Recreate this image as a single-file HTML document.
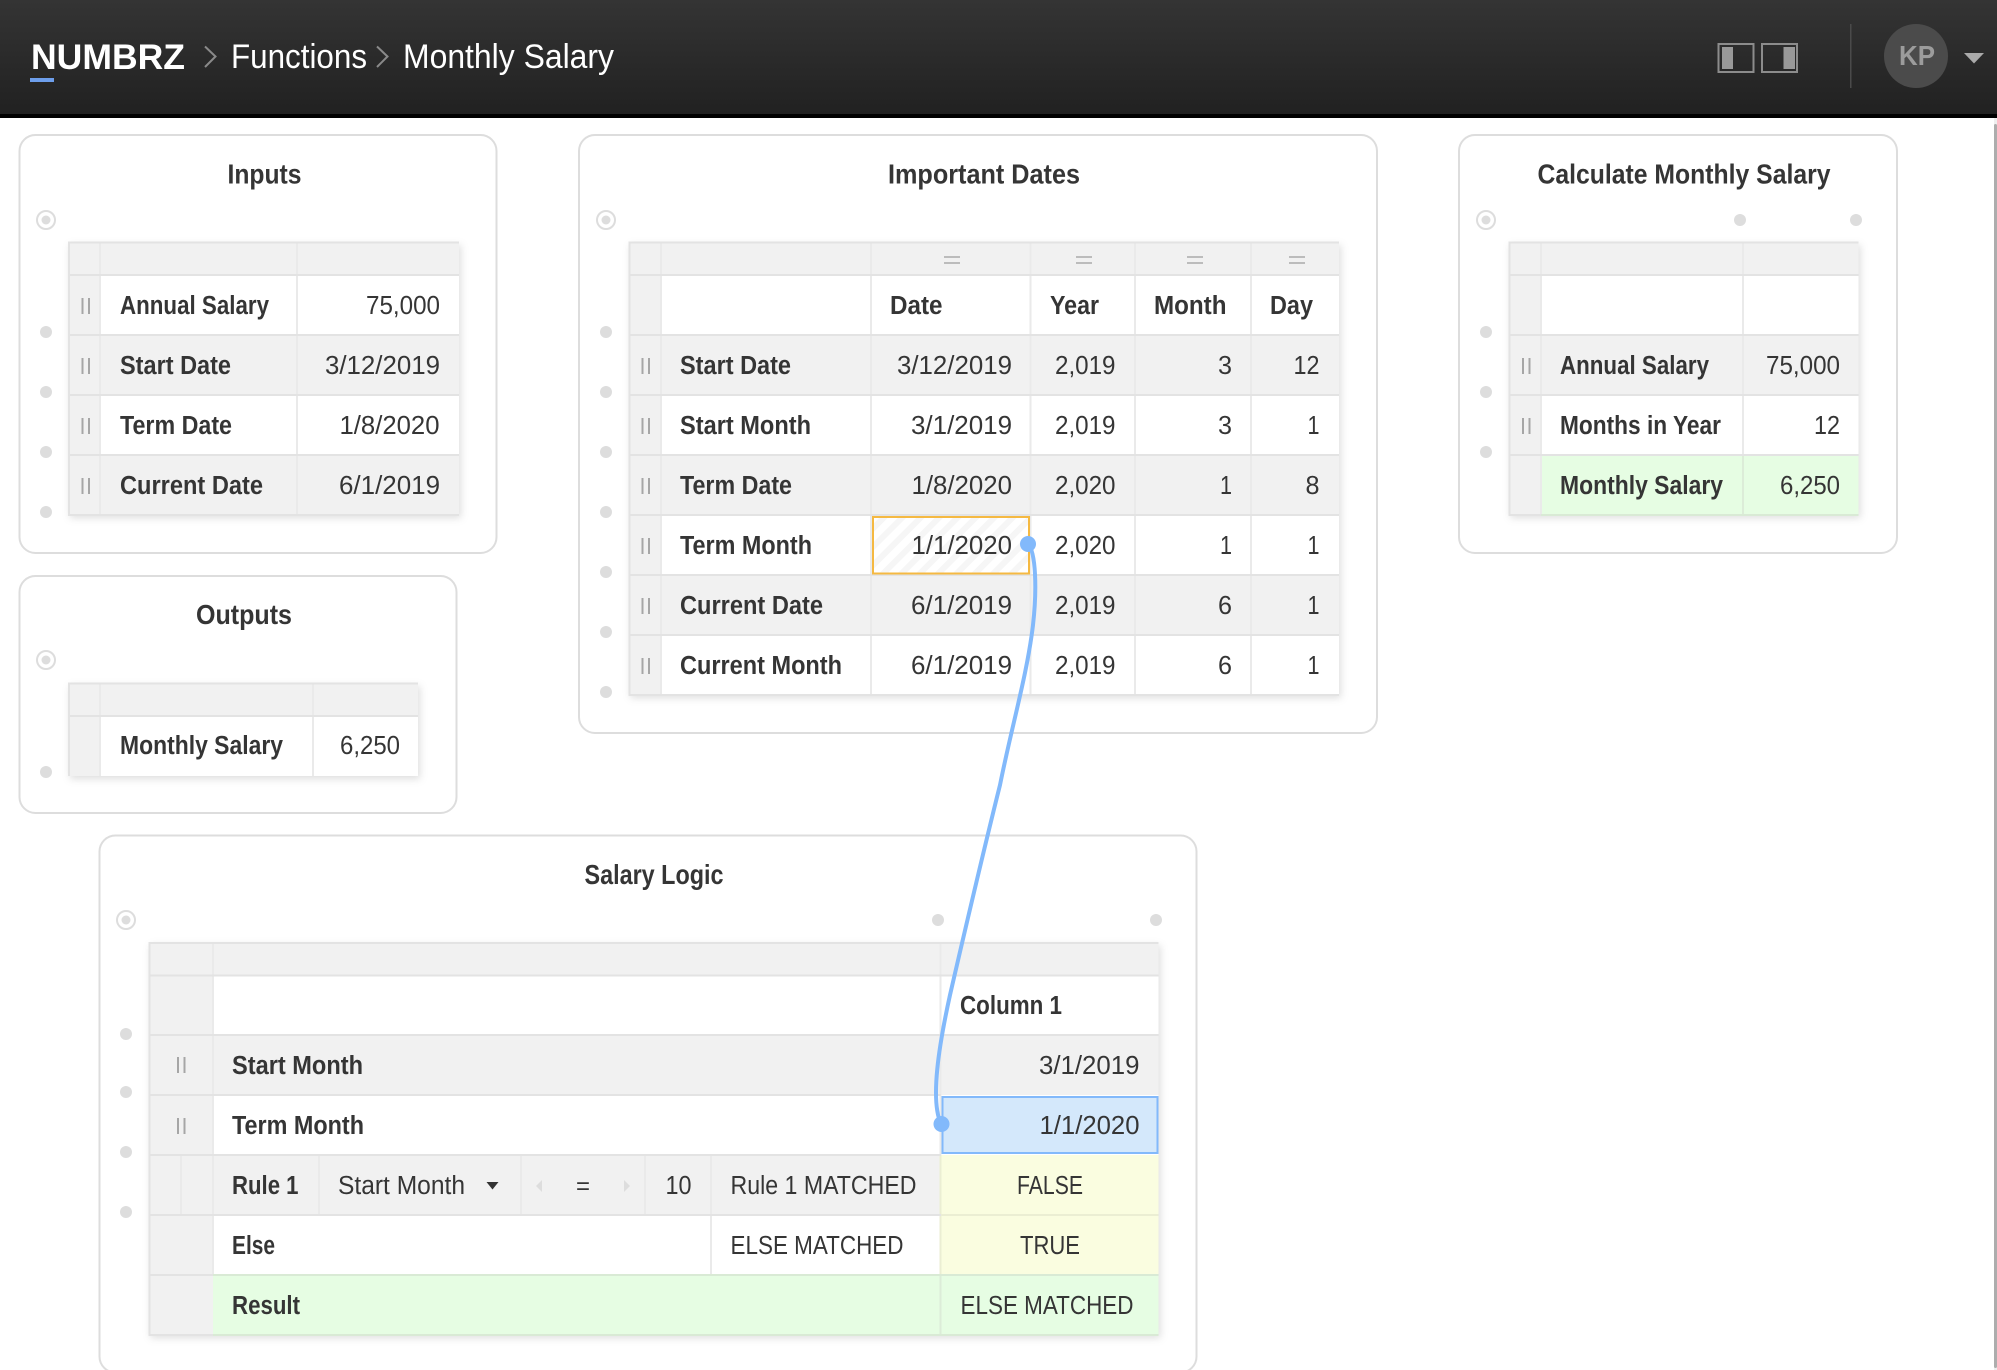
<!DOCTYPE html>
<html><head><meta charset="utf-8"><title>Monthly Salary</title>
<style>
html,body{margin:0;padding:0;background:#fff;overflow:hidden}
svg{display:block}
text{font-family:"Liberation Sans",sans-serif;font-size:25.5px;fill:#353535}
.b{font-weight:700}
.t{font-weight:700;font-size:27.5px}
.e{text-anchor:end}
.n{fill:#fff;font-size:34px}
.p{fill:none;stroke:#ddd;stroke-width:2}
.g{fill:#f1f1f1}
.h{stroke:#e3e3e3;stroke-width:2}
.v{stroke:#eaeaea;stroke-width:2}
.d{fill:#ddd}
.m{stroke:#a6a6a6;stroke-width:2}
.s{filter:drop-shadow(2px 3px 4px rgba(0,0,0,.13));fill:#fff}
</style></head><body>
<svg xmlns="http://www.w3.org/2000/svg" width="1997" height="1370" viewBox="0 0 1997 1370">
<defs>
<linearGradient id="hd" x1="0" y1="0" x2="0" y2="1"><stop offset="0" stop-color="#343434"/><stop offset="1" stop-color="#212121"/></linearGradient>
<pattern id="hat" width="13" height="13" patternUnits="userSpaceOnUse" patternTransform="rotate(45)"><rect width="13" height="13" fill="#fff"/><rect width="6" height="13" fill="#f6f6f6"/></pattern>
</defs>
<rect width="1997" height="1370" fill="#fff"/>
<!-- header -->
<rect width="1997" height="114" fill="url(#hd)"/>
<rect y="114" width="1997" height="4" fill="#000"/>
<text x="31" y="69" class="n b" style="font-size:35px" textLength="154" lengthAdjust="spacingAndGlyphs">NUMBRZ</text>
<rect x="30" y="78" width="24" height="4" fill="#6d9eeb"/>
<path d="M205 46.500L215.500 56.500L205 67" fill="none" stroke="#8a8a8a" stroke-width="2"/>
<text x="231" y="68" class="n" textLength="136" lengthAdjust="spacingAndGlyphs">Functions</text>
<path d="M377 46.500L387.500 56.500L377 67" fill="none" stroke="#8a8a8a" stroke-width="2"/>
<text x="403" y="68" class="n" textLength="211" lengthAdjust="spacingAndGlyphs">Monthly Salary</text>
<rect x="1718.500" y="44" width="35" height="28" fill="none" stroke="#8c8c8c" stroke-width="2"/>
<rect x="1722" y="47" width="11" height="22" fill="#999"/>
<rect x="1762" y="44" width="35" height="28" fill="none" stroke="#8c8c8c" stroke-width="2"/>
<rect x="1783.500" y="47" width="11.500" height="22" fill="#999"/>
<rect x="1850" y="24" width="1.500" height="64" fill="#4a4a4a"/>
<circle cx="1916" cy="56" r="32" fill="#4b4b4b"/>
<text x="1917" y="65" class="b" text-anchor="middle" style="font-size:28px;fill:#9c9c9c" textLength="36" lengthAdjust="spacingAndGlyphs">KP</text>
<path d="M1964 53H1984L1974 63.500Z" fill="#aaa"/>
<!-- scrollbar -->
<rect x="1994" y="118" width="3" height="1252" fill="#efefef"/>
<rect x="1994" y="124" width="3" height="1244" rx="1.500" fill="#adadad"/>

<!-- panels -->
<rect x="19.500" y="135" width="477" height="418" rx="16" class="p"/>
<rect x="19.500" y="576" width="437" height="237" rx="16" class="p"/>
<rect x="579" y="135" width="798" height="598" rx="16" class="p"/>
<rect x="1459" y="135" width="438" height="418" rx="16" class="p"/>
<rect x="99.500" y="835.500" width="1097" height="537" rx="16" class="p"/>

<!-- titles -->
<text x="227.500" y="183.500" class="t" textLength="74" lengthAdjust="spacingAndGlyphs">Inputs</text>
<text x="196" y="624" class="t" textLength="96" lengthAdjust="spacingAndGlyphs">Outputs</text>
<text x="888" y="183.500" class="t" textLength="192" lengthAdjust="spacingAndGlyphs">Important Dates</text>
<text x="1537.500" y="183.500" class="t" textLength="293" lengthAdjust="spacingAndGlyphs">Calculate Monthly Salary</text>
<text x="584.500" y="884" class="t" textLength="139" lengthAdjust="spacingAndGlyphs">Salary Logic</text>

<!-- radios + dots -->
<g fill="#fff" stroke="#ddd" stroke-width="2">
<circle cx="46" cy="220" r="9"/><circle cx="46" cy="660" r="9"/><circle cx="606" cy="220" r="9"/><circle cx="1486" cy="220" r="9"/><circle cx="126" cy="920" r="9"/>
</g>
<g class="d">
<circle cx="46" cy="220" r="4.500"/><circle cx="46" cy="660" r="4.500"/><circle cx="606" cy="220" r="4.500"/><circle cx="1486" cy="220" r="4.500"/><circle cx="126" cy="920" r="4.500"/>
<circle cx="46" cy="332" r="6"/><circle cx="46" cy="392" r="6"/><circle cx="46" cy="452" r="6"/><circle cx="46" cy="512" r="6"/>
<circle cx="46" cy="772" r="6"/>
<circle cx="606" cy="332" r="6"/><circle cx="606" cy="392" r="6"/><circle cx="606" cy="452" r="6"/><circle cx="606" cy="512" r="6"/><circle cx="606" cy="572" r="6"/><circle cx="606" cy="632" r="6"/><circle cx="606" cy="692" r="6"/>
<circle cx="1486" cy="332" r="6"/><circle cx="1486" cy="392" r="6"/><circle cx="1486" cy="452" r="6"/>
<circle cx="1740" cy="220" r="6"/><circle cx="1856" cy="220" r="6"/>
<circle cx="126" cy="1034" r="6"/><circle cx="126" cy="1092" r="6"/><circle cx="126" cy="1152" r="6"/><circle cx="126" cy="1212" r="6"/>
<circle cx="938" cy="920" r="6"/><circle cx="1156" cy="920" r="6"/>
</g>

<!-- Inputs table -->
<rect x="68" y="242" width="391" height="273" class="s"/>
<rect x="68" y="242" width="391" height="33" class="g"/>
<rect x="68" y="242" width="33" height="273" class="g"/>
<rect x="68" y="335" width="391" height="60" class="g"/>
<rect x="68" y="455" width="391" height="60" class="g"/>
<path class="v" d="M297 242V515M100 242V515"/>
<path class="h" d="M68 242.500H459M68 275H459M68 335H459M68 395H459M68 455H459M68 515H459M69 242V515"/>
<path class="m" d="M82.500 298V314M89 298V314M82.500 358V374M89 358V374M82.500 418V434M89 418V434M82.500 478V494M89 478V494"/>
<text x="120" y="314" class="b" textLength="149" lengthAdjust="spacingAndGlyphs">Annual Salary</text>
<text x="120" y="374" class="b" textLength="111" lengthAdjust="spacingAndGlyphs">Start Date</text>
<text x="120" y="434" class="b" textLength="112" lengthAdjust="spacingAndGlyphs">Term Date</text>
<text x="120" y="494" class="b" textLength="143" lengthAdjust="spacingAndGlyphs">Current Date</text>
<text x="366" y="314" textLength="74" lengthAdjust="spacingAndGlyphs">75,000</text>
<text x="325" y="374" textLength="115" lengthAdjust="spacingAndGlyphs">3/12/2019</text>
<text x="339.500" y="434" textLength="100" lengthAdjust="spacingAndGlyphs">1/8/2020</text>
<text x="339" y="494" textLength="101" lengthAdjust="spacingAndGlyphs">6/1/2019</text>

<!-- Outputs table -->
<rect x="68" y="683" width="350" height="93" class="s"/>
<rect x="68" y="683" width="350" height="33" class="g"/>
<rect x="68" y="683" width="33" height="93" class="g"/>
<path class="v" d="M313 683V776M100 683V776"/>
<path class="h" d="M68 683.500H418M68 716H418M69 683V776"/>
<text x="120" y="754" class="b" textLength="163" lengthAdjust="spacingAndGlyphs">Monthly Salary</text>
<text x="340" y="754" textLength="60" lengthAdjust="spacingAndGlyphs">6,250</text>

<!-- Important Dates table -->
<rect x="628.500" y="242" width="710.500" height="453" class="s"/>
<rect x="628.500" y="242" width="710.500" height="33" class="g"/>
<rect x="628.500" y="242" width="32.500" height="453" class="g"/>
<rect x="628.500" y="335" width="710.500" height="60" class="g"/>
<rect x="628.500" y="455" width="710.500" height="60" class="g"/>
<rect x="628.500" y="575" width="710.500" height="60" class="g"/>
<path class="v" d="M661 242V695M871 242V695M1030.500 242V695M1135 242V695M1251 242V695"/>
<path class="h" d="M628.500 242.500H1339M628.500 275H1339M628.500 335H1339M628.500 395H1339M628.500 455H1339M628.500 515H1339M628.500 575H1339M628.500 635H1339M628.500 695H1339M629.500 242V695"/>
<path d="M944 257H960M944 263H960M1076 257H1092M1076 263H1092M1187 257H1203M1187 263H1203M1289 257H1305M1289 263H1305" stroke="#aaa" stroke-width="1.500"/>
<path class="m" d="M642.500 358V374M649 358V374M642.500 418V434M649 418V434M642.500 478V494M649 478V494M642.500 538V554M649 538V554M642.500 598V614M649 598V614M642.500 658V674M649 658V674"/>
<rect x="873" y="517" width="156" height="56.500" fill="url(#hat)" stroke="#f5b942" stroke-width="2"/>
<text x="890" y="314" class="b" textLength="52.500" lengthAdjust="spacingAndGlyphs">Date</text>
<text x="1050" y="314" class="b" textLength="49" lengthAdjust="spacingAndGlyphs">Year</text>
<text x="1154" y="314" class="b" textLength="72.500" lengthAdjust="spacingAndGlyphs">Month</text>
<text x="1270" y="314" class="b" textLength="43" lengthAdjust="spacingAndGlyphs">Day</text>
<text x="680" y="374" class="b" textLength="111" lengthAdjust="spacingAndGlyphs">Start Date</text>
<text x="680" y="434" class="b" textLength="131" lengthAdjust="spacingAndGlyphs">Start Month</text>
<text x="680" y="494" class="b" textLength="112" lengthAdjust="spacingAndGlyphs">Term Date</text>
<text x="680" y="554" class="b" textLength="132" lengthAdjust="spacingAndGlyphs">Term Month</text>
<text x="680" y="614" class="b" textLength="143" lengthAdjust="spacingAndGlyphs">Current Date</text>
<text x="680" y="674" class="b" textLength="162" lengthAdjust="spacingAndGlyphs">Current Month</text>
<text x="897" y="374" textLength="115" lengthAdjust="spacingAndGlyphs">3/12/2019</text>
<text x="911" y="434" textLength="101" lengthAdjust="spacingAndGlyphs">3/1/2019</text>
<text x="911.500" y="494" textLength="100.500" lengthAdjust="spacingAndGlyphs">1/8/2020</text>
<text x="911.500" y="554" textLength="100.500" lengthAdjust="spacingAndGlyphs">1/1/2020</text>
<text x="911" y="614" textLength="101" lengthAdjust="spacingAndGlyphs">6/1/2019</text>
<text x="911" y="674" textLength="101" lengthAdjust="spacingAndGlyphs">6/1/2019</text>
<text x="1055" y="374" textLength="60.500" lengthAdjust="spacingAndGlyphs">2,019</text>
<text x="1055" y="434" textLength="60.500" lengthAdjust="spacingAndGlyphs">2,019</text>
<text x="1055" y="494" textLength="60.500" lengthAdjust="spacingAndGlyphs">2,020</text>
<text x="1055" y="554" textLength="60.500" lengthAdjust="spacingAndGlyphs">2,020</text>
<text x="1055" y="614" textLength="60.500" lengthAdjust="spacingAndGlyphs">2,019</text>
<text x="1055" y="674" textLength="60.500" lengthAdjust="spacingAndGlyphs">2,019</text>
<text x="1218" y="374" textLength="14" lengthAdjust="spacingAndGlyphs">3</text>
<text x="1218" y="434" textLength="14" lengthAdjust="spacingAndGlyphs">3</text>
<text x="1220" y="494" textLength="12" lengthAdjust="spacingAndGlyphs">1</text>
<text x="1220" y="554" textLength="12" lengthAdjust="spacingAndGlyphs">1</text>
<text x="1218" y="614" textLength="14" lengthAdjust="spacingAndGlyphs">6</text>
<text x="1218" y="674" textLength="14" lengthAdjust="spacingAndGlyphs">6</text>
<text x="1293.500" y="374" textLength="26" lengthAdjust="spacingAndGlyphs">12</text>
<text x="1307.500" y="434" textLength="12" lengthAdjust="spacingAndGlyphs">1</text>
<text x="1305.500" y="494" textLength="14" lengthAdjust="spacingAndGlyphs">8</text>
<text x="1307.500" y="554" textLength="12" lengthAdjust="spacingAndGlyphs">1</text>
<text x="1307.500" y="614" textLength="12" lengthAdjust="spacingAndGlyphs">1</text>
<text x="1307.500" y="674" textLength="12" lengthAdjust="spacingAndGlyphs">1</text>

<!-- Calculate table -->
<rect x="1508.500" y="242" width="350" height="273" class="s"/>
<rect x="1508.500" y="242" width="350" height="33" class="g"/>
<rect x="1508.500" y="242" width="32.500" height="273" class="g"/>
<rect x="1508.500" y="335" width="350" height="60" class="g"/>
<rect x="1541" y="455" width="317.500" height="60" fill="#e6fde3"/>
<path class="v" d="M1541 242V515M1743 242V455"/>
<path d="M1743 455V515" stroke="#dcecd8" stroke-width="2"/>
<path class="h" d="M1508.500 242.500H1858.500M1508.500 275H1858.500M1508.500 335H1858.500M1508.500 395H1858.500M1508.500 455H1858.500M1509.500 242V515M1508.500 515H1541"/>
<path d="M1541 515H1858.500" stroke="#d9ead5" stroke-width="2"/>
<path class="m" d="M1523 358V374M1529.500 358V374M1523 418V434M1529.500 418V434"/>
<text x="1560" y="374" class="b" textLength="149" lengthAdjust="spacingAndGlyphs">Annual Salary</text>
<text x="1560" y="434" class="b" textLength="161" lengthAdjust="spacingAndGlyphs">Months in Year</text>
<text x="1560" y="494" class="b" textLength="163" lengthAdjust="spacingAndGlyphs">Monthly Salary</text>
<text x="1766" y="374" textLength="74" lengthAdjust="spacingAndGlyphs">75,000</text>
<text x="1814" y="434" textLength="26" lengthAdjust="spacingAndGlyphs">12</text>
<text x="1780" y="494" textLength="60" lengthAdjust="spacingAndGlyphs">6,250</text>

<!-- Salary Logic table -->
<rect x="148.500" y="942.500" width="1010" height="392.500" class="s"/>
<rect x="148.500" y="942.500" width="1010" height="33" class="g"/>
<rect x="148.500" y="942.500" width="64.500" height="392.500" class="g"/>
<rect x="148.500" y="1035" width="1010" height="60" class="g"/>
<rect x="148.500" y="1155" width="792.500" height="60" class="g"/>
<rect x="941" y="1155" width="217.500" height="120" fill="#fafde0"/>
<rect x="213" y="1275" width="945.500" height="60" fill="#e6fde3"/>
<path class="v" d="M213 942.500V1275M940.500 942.500V1155M181 1155V1215M319 1155V1215M521 1155V1215M645 1155V1215M711 1155V1275"/>
<path d="M940.500 1155V1275M941 1215H1158.500" stroke="#ebeed3" stroke-width="2"/>
<path d="M940.500 1275V1335" stroke="#dcecd8" stroke-width="2"/>
<path class="h" d="M148.500 943H1158.500M148.500 975.500H1158.500M148.500 1035H1158.500M148.500 1095H941M148.500 1155H941M148.500 1215H941M149.500 942.500V1335M148.500 1275H213M148.500 1335H213"/>
<path d="M213 1275H1158.500M213 1335H1158.500" stroke="#d9ead5" stroke-width="2"/>
<path class="m" d="M178 1057V1073M184.500 1057V1073M178 1118V1134M184.500 1118V1134"/>
<rect x="942.500" y="1097" width="215" height="56" fill="#d4e8fb" stroke="#82b9fb" stroke-width="2"/>
<text x="960" y="1014" class="b" textLength="102" lengthAdjust="spacingAndGlyphs">Column 1</text>
<text x="232" y="1074" class="b" textLength="131" lengthAdjust="spacingAndGlyphs">Start Month</text>
<text x="232" y="1134" class="b" textLength="132" lengthAdjust="spacingAndGlyphs">Term Month</text>
<text x="232" y="1194" class="b" textLength="66.500" lengthAdjust="spacingAndGlyphs">Rule 1</text>
<text x="232" y="1254" class="b" textLength="43" lengthAdjust="spacingAndGlyphs">Else</text>
<text x="232" y="1314" class="b" textLength="68" lengthAdjust="spacingAndGlyphs">Result</text>
<text x="1039" y="1074" textLength="100.500" lengthAdjust="spacingAndGlyphs">3/1/2019</text>
<text x="1039.500" y="1134" textLength="100" lengthAdjust="spacingAndGlyphs">1/1/2020</text>
<text x="338" y="1194" textLength="127" lengthAdjust="spacingAndGlyphs">Start Month</text>
<path d="M486.500 1182H498.500L492.500 1189.500Z" fill="#333"/>
<path d="M542 1180V1192L536 1186Z" fill="#ddd"/>
<path d="M624 1180V1192L630 1186Z" fill="#ddd"/>
<text x="576" y="1194" textLength="14" lengthAdjust="spacingAndGlyphs" style="font-size:24px">=</text>
<text x="665.500" y="1194" textLength="26" lengthAdjust="spacingAndGlyphs">10</text>
<text x="730.500" y="1194" textLength="186" lengthAdjust="spacingAndGlyphs">Rule 1 MATCHED</text>
<text x="730.500" y="1254" textLength="173" lengthAdjust="spacingAndGlyphs">ELSE MATCHED</text>
<text x="1017" y="1194" textLength="66" lengthAdjust="spacingAndGlyphs">FALSE</text>
<text x="1020" y="1254" textLength="60" lengthAdjust="spacingAndGlyphs">TRUE</text>
<text x="960.500" y="1314" textLength="173" lengthAdjust="spacingAndGlyphs">ELSE MATCHED</text>

<!-- connector -->
<path d="M1028 544C1036 552 1037 590 1033 625C1027 675 1012 725 1000 785C985 845 965 930 950 995C939 1045 930 1100 941 1124" fill="none" stroke="#82b9fb" stroke-width="4"/>
<circle cx="1028" cy="544" r="8" fill="#82b9fb"/>
<circle cx="941.500" cy="1124" r="8" fill="#82b9fb"/>
</svg>
</body></html>
